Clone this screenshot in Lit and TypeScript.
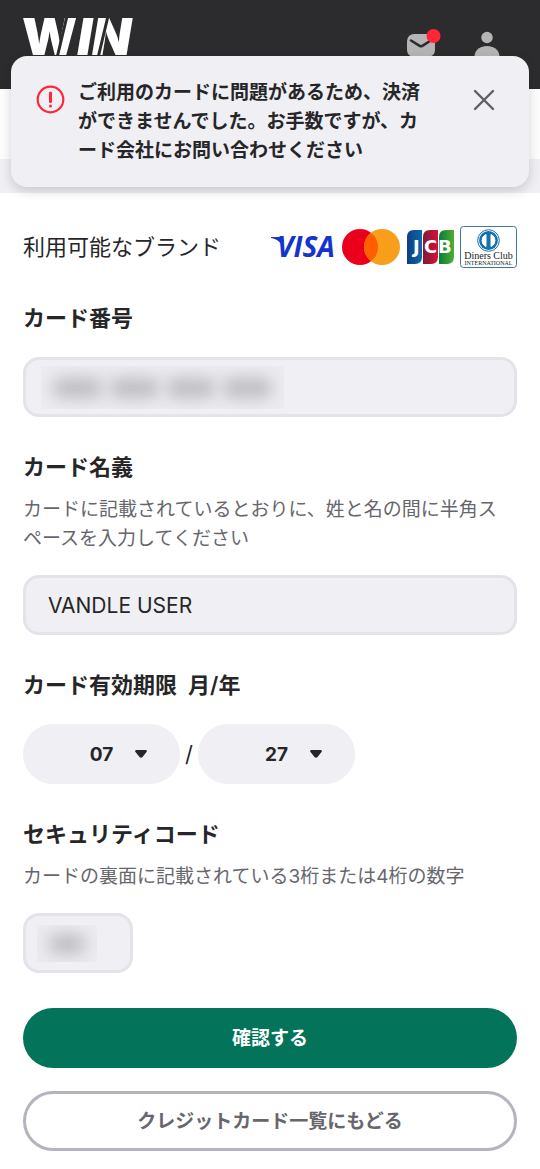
import { LitElement, html, css } from "lit";
import { customElement } from "lit/decorators.js";

const months = Array.from({ length: 12 }, (_, i) => String(i + 1).padStart(2, "0"));
const years = Array.from({ length: 12 }, (_, i) => String(i + 24));

@customElement("app-root")
export class AppRoot extends LitElement {
  static styles = css`
    :host {
      display: block;
      position: relative;
      background: #fff;
      color: #262628;
      font-family: Inter, "Noto Sans CJK JP", sans-serif;
      font-size: 22px;
      line-height: 30px;
    }
    * { box-sizing: border-box; }
    svg { display: block; }
    button, input, select { font-family: inherit; color: inherit; margin: 0; }

    .header {
      display: flex;
      justify-content: space-between;
      align-items: flex-start;
      height: 89px;
      padding: 8px 39px 0 22px;
      background: #2c2c2e;
    }
    .tools { display: flex; gap: 32px; padding-top: 18px; }
    .tool { border: 0; padding: 0; background: none; }
    .intro { height: 70px; background: #fdfdfd; }
    .strip { height: 34px; background: #efeff4; }

    .toast {
      position: absolute;
      z-index: 1;
      top: 56px;
      left: 11px;
      right: 11px;
      display: flex;
      align-items: flex-start;
      padding: 22px 34px 22px 25px;
      border-radius: 16px;
      background: #efeff4;
      box-shadow: 0 4px 12px rgba(0, 0, 0, 0.16);
    }
    .alert { flex: none; margin: 7px 13px 0 0; }
    .message {
      flex: 1;
      margin: 0 46px 0 0;
      font-size: 19px;
      line-height: 29px;
      font-weight: 600;
    }
    .close { border: 0; padding: 11px 0 0; background: none; color: #5f5f66; }

    .main { padding: 33px 23px 18px; }
    .brands {
      display: flex;
      align-items: center;
      justify-content: space-between;
      height: 42px;
    }
    .logos { display: flex; align-items: center; gap: 6px; }
    .form { display: block; }
    .field { margin: 35px 0 0; padding: 0; border: 0; }
    .title {
      display: block;
      padding: 0;
      font-size: 22px;
      line-height: 30px;
      font-weight: 600;
    }
    .hint {
      margin: 13px 0 0;
      padding-right: 10px;
      color: #66666c;
      font-size: 19px;
      line-height: 29px;
    }
    .control { position: relative; margin-top: 24px; }
    .hint + .control { margin-top: 22px; }
    .input {
      display: block;
      width: 100%;
      height: 60px;
      padding: 0 22px;
      border: 3px solid #e3e3e9;
      border-radius: 16px;
      background: #efeff4;
      font-size: 21px;
    }
    .short { width: 110px; }
    .mask {
      position: absolute;
      top: 9px;
      left: 18px;
      display: flex;
      align-items: center;
      gap: 8px;
      width: 243px;
      height: 43px;
      padding: 0 12px;
      overflow: hidden;
      background: #ececf0;
      pointer-events: none;
    }
    .mask-short { top: 12px; left: 14px; width: 60px; height: 37px; }
    .smudge {
      flex: 1;
      height: 20px;
      border-radius: 8px;
      background: #bdbdc1;
      filter: blur(8px);
    }
    .expiry { display: flex; align-items: center; gap: 5px; margin-top: 24px; }
    .picker { position: relative; width: 157px; }
    .select {
      display: block;
      width: 100%;
      height: 60px;
      padding: 0;
      border: 0;
      border-radius: 30px;
      background: #efeff4;
      appearance: none;
      font-size: 19px;
      font-weight: 700;
      text-align: center;
      text-align-last: center;
    }
    .caret { position: absolute; top: 26px; right: 33px; pointer-events: none; }
    .actions { display: grid; gap: 23px; margin-top: 35px; }
    .button {
      height: 60px;
      padding: 0 0 4px;
      border: 0;
      border-radius: 30px;
      background: #03735a;
      color: #fff;
      font-size: 19px;
      font-weight: 700;
    }
    .outline { border: 3px solid #b4b4be; background: #fff; color: #66666c; }
  `;

  render() {
    return html`
      <header class="header">
        <svg width="122" height="70" viewBox="0 0 122 70" role="img" aria-label="WIN">
          <text x="0" y="47" fill="#fff" font-family="Inter, sans-serif" font-weight="900" font-size="51">W<tspan font-style="italic">IN</tspan></text>
          <path d="m45 8-10 42M86 8 76 50" stroke="#2c2c2e" stroke-width="3" />
        </svg>
        <div class="tools">
          <button class="tool" type="button" aria-label="お知らせ">
            <svg width="34" height="32" viewBox="0 0 34 32">
              <rect x="0" y="7" width="28" height="23" rx="7" fill="#b5b5b5" />
              <path d="m4 13.500 9 5.500q1 .5 2 0l8-5" fill="none" stroke="#2c2c2e" stroke-width="2.600" stroke-linecap="round" />
              <circle cx="26.500" cy="9" r="7" fill="#ff2638" />
            </svg>
          </button>
          <button class="tool" type="button" aria-label="マイページ">
            <svg width="28" height="34" viewBox="0 0 28 34" fill="#b5b5b5">
              <circle cx="14" cy="11.500" r="5.700" />
              <path d="M1.500 30C2 23.500 7.500 20 14 20s12 3.500 12.500 10v4h-25Z" />
            </svg>
          </button>
        </div>
      </header>

      <div class="toast" role="alert">
        <svg class="alert" width="29" height="29" viewBox="0 0 29 29" fill="none" stroke="#ff2638">
          <circle cx="14.500" cy="14.500" r="12.800" stroke-width="2.200" />
          <path d="M14.500 8v8.500" stroke-width="3" stroke-linecap="round" />
          <circle cx="14.500" cy="21" r="1.500" fill="#ff2638" stroke="none" />
        </svg>
        <p class="message">
          ご利用のカードに問題があるため、決済ができませんでした。お手数ですが、カード会社にお問い合わせください
        </p>
        <button class="close" type="button" aria-label="閉じる">
          <svg width="22" height="22" viewBox="0 0 22 22">
            <path d="m2 2 18 18M20 2 2 20" stroke="currentColor" stroke-width="2.400" stroke-linecap="round" />
          </svg>
        </button>
      </div>

      <div class="intro"></div>
      <div class="strip"></div>

      <main class="main">
        <div class="brands">
          <span>利用可能なブランド</span>
          <div class="logos">
            <svg width="66" height="42" viewBox="0 0 66 42" role="img" aria-label="VISA">
              <path d="M1 11h10l3 4-2 4Q8 13 1 12Z" fill="#1434cb" />
              <text x="7" y="31" fill="#1434cb" font-family="Open Sans" font-size="28" font-weight="700" font-style="italic">VISA</text>
            </svg>
            <svg width="59" height="42" viewBox="0 0 59 42" role="img" aria-label="Mastercard">
              <circle cx="18" cy="21" r="18" fill="#eb001b" />
              <circle cx="40" cy="21" r="18" fill="#f79e1b" />
              <path d="M29 6.750a18 18 0 0 1 0 28.500 18 18 0 0 1 0-28.500Z" fill="#ff5f00" />
            </svg>
            <svg width="47" height="42" viewBox="0 0 47 42" role="img" aria-label="JCB">
              <defs>
                <linearGradient id="jb"><stop stop-color="#123f7c" /><stop offset="1" stop-color="#0967b1" /></linearGradient>
                <linearGradient id="jr"><stop stop-color="#761f38" /><stop offset="1" stop-color="#dc0e37" /></linearGradient>
                <linearGradient id="jg"><stop stop-color="#087c3a" /><stop offset="1" stop-color="#4fae34" /></linearGradient>
              </defs>
              <path d="M7 4h8v27q0 7-7 7H0V11q0-7 7-7Z" fill="url(#jb)" />
              <path d="M23 4h8v27q0 7-7 7h-8V11q0-7 7-7Z" fill="url(#jr)" />
              <path d="M39 4h8v27q0 7-7 7h-8V11q0-7 7-7Z" fill="url(#jg)" />
              <text y="27" fill="#fff" font-family="DejaVu Sans" font-size="18" font-weight="700"><tspan x="6">J</tspan><tspan x="17">C</tspan><tspan x="31">B</tspan></text>
            </svg>
            <svg width="57" height="42" viewBox="0 0 57 42" role="img" aria-label="Diners Club International">
              <rect x=".5" y=".5" width="56" height="41" rx="3" fill="#fff" stroke="#3d77a0" />
              <circle cx="28.500" cy="14.500" r="10.800" fill="#fff" stroke="#1670ad" />
              <circle cx="28.500" cy="14.500" r="9.400" fill="#1670ad" />
              <path d="M26 8.500v12a6.500 6.500 0 0 1 0-12ZM31 8.500v12a6.500 6.500 0 0 0 0-12Z" fill="#fff" stroke="#fff" />
              <text x="28.500" y="33" text-anchor="middle" fill="#222" font-family="Liberation Serif" font-size="10">Diners Club</text>
              <text x="28.500" y="39" text-anchor="middle" fill="#222" font-family="Liberation Serif" font-size="6">INTERNATIONAL</text>
            </svg>
          </div>
        </div>

        <form class="form" @submit=${(e: Event) => e.preventDefault()}>
          <div class="field">
            <label class="title" for="number">カード番号</label>
            <div class="control">
              <input class="input" id="number" inputmode="numeric" autocomplete="cc-number" />
              <div class="mask" aria-hidden="true">
                <i class="smudge"></i><i class="smudge"></i><i class="smudge"></i><i class="smudge"></i>
              </div>
            </div>
          </div>

          <div class="field">
            <label class="title" for="holder">カード名義</label>
            <p class="hint" id="holder-hint">
              カードに記載されているとおりに、姓と名の間に半角スペースを入力してください
            </p>
            <div class="control">
              <input class="input" id="holder" value="VANDLE USER" aria-describedby="holder-hint" />
            </div>
          </div>

          <fieldset class="field">
            <legend class="title">カード有効期限&nbsp; 月/年</legend>
            <div class="expiry">
              <div class="picker">
                <select class="select" aria-label="月">
                  ${months.map((m) => html`<option ?selected=${m === "07"}>${m}</option>`)}
                </select>
                ${this.caret()}
              </div>
              <span>/</span>
              <div class="picker">
                <select class="select" aria-label="年">
                  ${years.map((y) => html`<option ?selected=${y === "27"}>${y}</option>`)}
                </select>
                ${this.caret()}
              </div>
            </div>
          </fieldset>

          <div class="field">
            <label class="title" for="code">セキュリティコード</label>
            <p class="hint" id="code-hint">カードの裏面に記載されている3桁または4桁の数字</p>
            <div class="control">
              <input class="input short" id="code" inputmode="numeric" aria-describedby="code-hint" />
              <div class="mask mask-short" aria-hidden="true"><i class="smudge"></i></div>
            </div>
          </div>

          <div class="actions">
            <button class="button" type="submit">確認する</button>
            <button class="button outline" type="button">クレジットカード一覧にもどる</button>
          </div>
        </form>
      </main>
    `;
  }

  private caret() {
    return html`
      <svg class="caret" width="12" height="8" viewBox="0 0 12 8" aria-hidden="true">
        <path d="M1 0h10q1.500 .5.500 2L7.500 7q-1.500 1.500-3 0L.500 2Q-.500.500 1 0Z" fill="#262628" />
      </svg>
    `;
  }
}
